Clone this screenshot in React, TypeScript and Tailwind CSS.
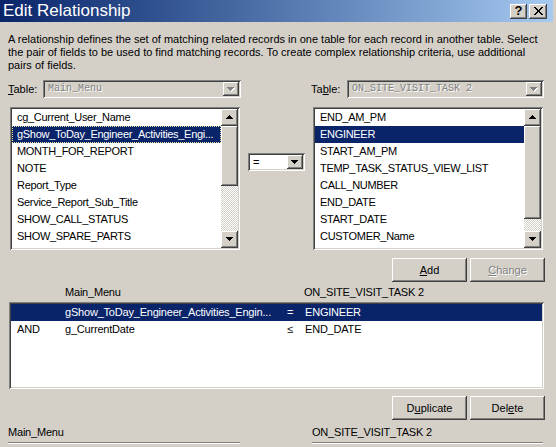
import type { ReactNode } from "react";

const sunken =
  "shadow-[inset_1px_1px_0_#808080,inset_-1px_-1px_0_#ffffff,inset_2px_2px_0_#404040,inset_-2px_-2px_0_#d4d0c8]";
const raised =
  "shadow-[inset_-1px_-1px_0_#404040,inset_1px_1px_0_#ffffff,inset_-2px_-2px_0_#808080,inset_2px_2px_0_#d4d0c8]";
const hatch = "[background:repeating-conic-gradient(#ffffff_0%_25%,#d4d0c8_0%_50%)_0_0/2px_2px]";
const disabledText = "text-[#808080] [text-shadow:1px_1px_0_#ffffff]";

function Arrow({ up = false, disabled = false }: { up?: boolean; disabled?: boolean }) {
  const rows = [7, 5, 3, 1];
  const ordered = up ? [...rows].reverse() : rows;
  const fill = disabled ? "#808080" : "#000000";
  return (
    <svg width="8" height="5" viewBox="0 0 8 5" shapeRendering="crispEdges">
      {disabled &&
        ordered.map((w, i) => (
          <rect key={"s" + i} x={(7 - w) / 2 + 1} y={i + 1} width={w} height={1} fill="#ffffff" />
        ))}
      {ordered.map((w, i) => (
        <rect key={i} x={(7 - w) / 2} y={i} width={w} height={1} fill={fill} />
      ))}
    </svg>
  );
}

function ArrowButton({ up = false, disabled = false, className = "" }: { up?: boolean; disabled?: boolean; className?: string }) {
  return (
    <div className={`flex items-center justify-center bg-[#d4d0c8] ${raised} ${className}`}>
      <Arrow up={up} disabled={disabled} />
    </div>
  );
}

function Scrollbar({ thumb }: { thumb: number }) {
  return (
    <div className="flex w-[17px] flex-col">
      <ArrowButton up className="h-[17px] w-[17px] shrink-0" />
      <div className={`w-[17px] shrink-0 bg-[#d4d0c8] ${raised}`} style={{ height: thumb }} />
      <div className={`flex-1 ${hatch}`} />
      <ArrowButton className="h-[17px] w-[17px] shrink-0" />
    </div>
  );
}

function ListBox({ items, selected, thumb, focus = false }: { items: string[]; selected: number; thumb: number; focus?: boolean }) {
  return (
    <div className={`flex h-[143px] w-[230px] bg-white p-[2px] ${sunken}`}>
      <div className="min-w-0 flex-1 overflow-hidden tracking-[-0.3px]">
        {items.map((it, i) => (
          <div
            key={it}
            className={`h-[17px] whitespace-nowrap pl-[5px] leading-[17px] ${
              i === selected ? "bg-[#0a246a] text-white" : ""
            } ${i === selected && focus ? "outline-1 -outline-offset-1 outline-dotted outline-[#e8e0a0]" : ""}`}
          >
            {it}
          </div>
        ))}
      </div>
      <Scrollbar thumb={thumb} />
    </div>
  );
}

function Combo({ text, disabled = false, className = "" }: { text: string; disabled?: boolean; className?: string }) {
  return (
    <div className={`flex h-[18px] p-[2px] ${disabled ? "bg-[#d4d0c8]" : "bg-white"} ${sunken} ${className}`}>
      <div
        className={`min-w-0 flex-1 overflow-hidden whitespace-nowrap pl-[3px] leading-[14px] ${
          disabled ? `font-['Liberation_Mono'] text-[10px] ${disabledText}` : ""
        }`}
      >
        {text}
      </div>
      <ArrowButton disabled={disabled} className="h-[14px] w-[16px]" />
    </div>
  );
}

function Button({ children, disabled = false }: { children: ReactNode; disabled?: boolean }) {
  return (
    <div
      className={`flex h-[24px] w-[75px] items-center justify-center bg-[#d4d0c8] ${raised} ${
        disabled ? disabledText : ""
      }`}
    >
      {children}
    </div>
  );
}

const leftItems = [
  "cg_Current_User_Name",
  "gShow_ToDay_Engineer_Activities_Engi...",
  "MONTH_FOR_REPORT",
  "NOTE",
  "Report_Type",
  "Service_Report_Sub_Title",
  "SHOW_CALL_STATUS",
  "SHOW_SPARE_PARTS",
];

const rightItems = [
  "END_AM_PM",
  "ENGINEER",
  "START_AM_PM",
  "TEMP_TASK_STATUS_VIEW_LIST",
  "CALL_NUMBER",
  "END_DATE",
  "START_DATE",
  "CUSTOMER_Name",
];

const rows = [
  { and: "", left: "gShow_ToDay_Engineer_Activities_Engin...", op: "=", right: "ENGINEER" },
  { and: "AND", left: "g_CurrentDate", op: "≤", right: "END_DATE" },
];

export default function App() {
  return (
    <div className="relative h-[447px] w-[556px] overflow-hidden bg-[#d4d0c8] font-['Liberation_Sans',sans-serif] text-[11px] text-black">
      {/* title bar */}
      <div className="mr-[3px] flex h-[22px] items-center bg-linear-to-r from-[#0a246a] to-[#a6caf0] pl-[3px] pr-[6px]">
        <span className="flex-1 text-[17px] leading-[22px] text-white">Edit Relationship</span>
        <div className={`flex h-[15px] w-[17px] items-center justify-center bg-[#d4d0c8] text-[13px] font-bold ${raised}`}>
          ?
        </div>
        <div className={`ml-[2px] flex h-[15px] w-[18px] items-center justify-center bg-[#d4d0c8] ${raised}`}>
          <svg width="9" height="8" viewBox="0 0 9 8" shapeRendering="crispEdges">
            <path d="M0 0h2l2.5 3 2.5-3h2l-3.5 4 3.5 4h-2l-2.5-3-2.5 3h-2l3.5-4z" fill="#000" />
          </svg>
        </div>
      </div>

      {/* description */}
      <p className="mt-[11px] pl-[8px] pr-[14px] leading-[13px]">
        A relationship defines the set of matching related records in one table for each record in another table. Select
        the pair of fields to be used to find matching records. To create complex relationship criteria, use additional
        pairs of fields.
      </p>

      {/* table selectors */}
      <div className="mt-[8px] flex h-[18px] items-center">
        <span className="w-[43px] shrink-0 pl-[8px]">
          <u>T</u>able:
        </span>
        <Combo text="Main_Menu" disabled className="w-[198px] shrink-0" />
        <span className="ml-[70px] w-[36px] shrink-0">
          Ta<u>b</u>le:
        </span>
        <Combo text="ON_SITE_VISIT_TASK 2" disabled className="w-[197px] shrink-0" />
      </div>

      {/* field lists */}
      <div className="mt-[9px] flex pl-[10px]">
        <ListBox items={leftItems} selected={1} thumb={60} focus />
        <Combo text="=" className="ml-[8px] mt-[46px] w-[57px]" />
        <div className="ml-[8px]">
          <ListBox items={rightItems} selected={1} thumb={93} />
        </div>
      </div>

      <div className="mt-[8px] flex justify-end gap-[3px] pr-[11px]">
        <Button>
          <u>A</u>dd
        </Button>
        <Button disabled>
          <u>C</u>hange
        </Button>
      </div>

      {/* column headers */}
      <div className="flex h-[20px] items-center pl-[65px] tracking-[-0.2px]">
        <span className="w-[239px]">Main_Menu</span>
        <span>ON_SITE_VISIT_TASK 2</span>
      </div>

      {/* relationship grid */}
      <div className={`ml-[9px] h-[87px] w-[535px] bg-white p-[2px] tracking-[-0.2px] ${sunken}`}>
        {rows.map((r, i) => (
          <div
            key={i}
            className={`flex h-[17px] items-center whitespace-nowrap ${i === 0 ? "bg-[#0a246a] text-white" : ""}`}
          >
            <span className="w-[54px] shrink-0 pl-[6px]">{r.and}</span>
            <span className="w-[222px] shrink-0 overflow-hidden">{r.left}</span>
            <span className="w-[18px] shrink-0">{r.op}</span>
            <span>{r.right}</span>
          </div>
        ))}
      </div>

      <div className="mt-[7px] flex justify-end gap-[3px] pr-[11px]">
        <Button>
          D<u>u</u>plicate
        </Button>
        <Button>
          Del<u>e</u>te
        </Button>
      </div>

      {/* bottom labels */}
      <div className="mt-[5px] flex tracking-[-0.2px]">
        <div className="ml-[8px] w-[232px]">
          <div className="h-[14px] leading-[14px]">Main_Menu</div>
          <div className="mt-[3px] h-[2px] border-t border-b border-t-[#808080] border-b-white" />
        </div>
        <div className="ml-[72px] w-[231px]">
          <div className="h-[14px] leading-[14px]">ON_SITE_VISIT_TASK 2</div>
          <div className="mt-[3px] h-[2px] border-t border-b border-t-[#808080] border-b-white" />
        </div>
      </div>
    </div>
  );
}
